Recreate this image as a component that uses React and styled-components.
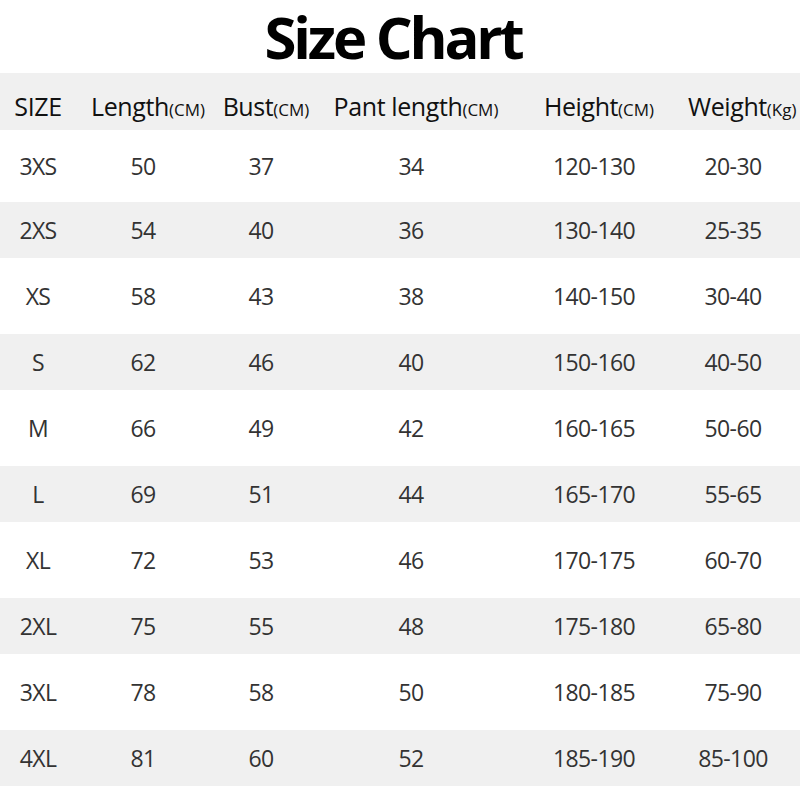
import React from "react";
import styled, { createGlobalStyle } from "styled-components";

const GlobalStyle = createGlobalStyle`
  html, body {
    margin: 0;
    padding: 0;
    background: #ffffff;
  }
`;

const columns = ["76px", "134px", "102px", "198px", "168px", "110px"];

const headers = [
  ["SIZE", ""],
  ["Length", "(CM)"],
  ["Bust", "(CM)"],
  ["Pant length", "(CM)"],
  ["Height", "(CM)"],
  ["Weight", "(Kg)"],
];

const rows = [
  ["3XS", "50", "37", "34", "120-130", "20-30"],
  ["2XS", "54", "40", "36", "130-140", "25-35"],
  ["XS", "58", "43", "38", "140-150", "30-40"],
  ["S", "62", "46", "40", "150-160", "40-50"],
  ["M", "66", "49", "42", "160-165", "50-60"],
  ["L", "69", "51", "44", "165-170", "55-65"],
  ["XL", "72", "53", "46", "170-175", "60-70"],
  ["2XL", "75", "55", "48", "175-180", "65-80"],
  ["3XL", "78", "58", "50", "180-185", "75-90"],
  ["4XL", "81", "60", "52", "185-190", "85-100"],
];

function App() {
  return (
    <>
      <GlobalStyle />
      <Page>
        <TitleBar>
          <Title>Size Chart</Title>
        </TitleBar>
        <HeaderRow>
          {headers.map(([label, unit], i) => (
            <HeadCell key={label} $nudge={i > 0}>
              {label}
              {unit && <Unit>{unit}</Unit>}
            </HeadCell>
          ))}
        </HeaderRow>
        {rows.map((row, i) => (
          <Row key={row[0]} $shaded={i % 2 === 1} $first={i === 0}>
            {row.map((value, j) => (
              <Cell key={j}>{value}</Cell>
            ))}
          </Row>
        ))}
      </Page>
    </>
  );
}

const Page = styled.div`
  width: 800px;
  height: 800px;
  background: #ffffff;
  font-family: "Open Sans", "Noto Sans", sans-serif;
  overflow: hidden;
`;

const TitleBar = styled.div`
  height: 73px;
  display: flex;
  align-items: center;
  justify-content: center;
  padding-right: 14px;
`;

const Title = styled.h1`
  margin: 0;
  padding: 0 4px;
  font-size: 58px;
  line-height: normal;
  font-weight: 700;
  letter-spacing: -3.2px;
  color: #000000;
`;

const Grid = styled.div`
  display: grid;
  grid-template-columns: ${columns.join(" ")};
  align-items: center;
`;

const HeaderRow = styled(Grid)`
  position: relative;
  height: 57px;
  background: #f0f0f0;
  padding-top: 8px;
  box-sizing: border-box;
`;

const HeadCell = styled.div`
  text-align: center;
  white-space: nowrap;
  font-size: 25px;
  letter-spacing: -0.4px;
  color: #111111;
  padding-left: ${(p) => (p.$nudge ? "10px" : "0")};
`;

const Unit = styled.span`
  font-size: 17px;
  letter-spacing: 0;
`;

const Row = styled(Grid)`
  height: ${(p) => (p.$first ? "72px" : p.$shaded ? "56px" : "76px")};
  background: ${(p) => (p.$shaded ? "#f0f0f0" : "#ffffff")};
`;

const Cell = styled.div`
  text-align: center;
  white-space: nowrap;
  font-size: 23px;
  letter-spacing: -0.6px;
  color: #333333;
`;

export default App;
